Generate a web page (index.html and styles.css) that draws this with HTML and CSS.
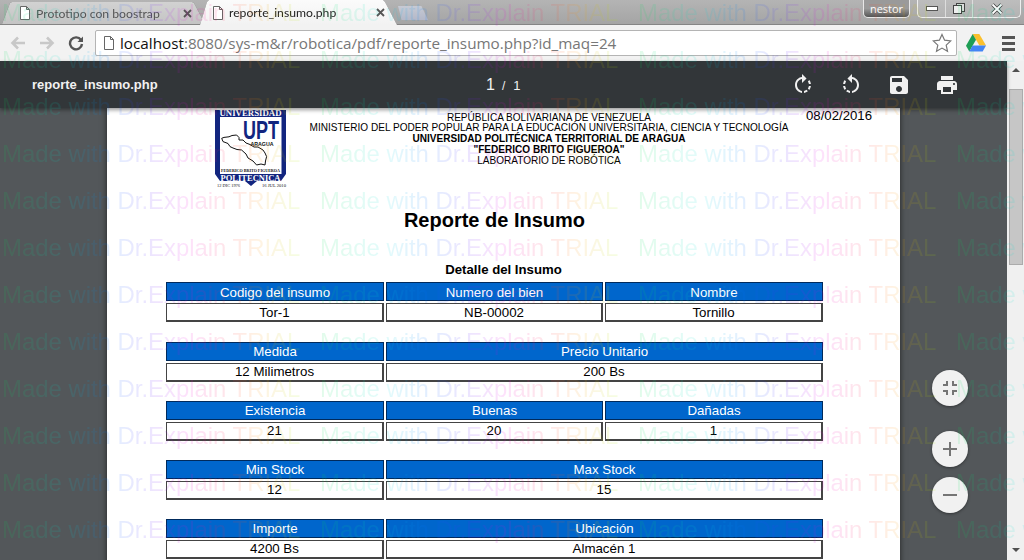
FILE: index.html
```html
<!DOCTYPE html>
<html lang="es">
<head>
<meta charset="utf-8">
<title>reporte_insumo.php</title>
<link rel="stylesheet" href="styles.css">
</head>
<body>
<div class="window">
  <header class="tabstrip">
    <div class="tab tab-bg">
      <svg class="doc" viewBox="0 0 12 14"><path d="M1.500.5h6l3 3v10h-9z M7.500.5v3h3"/></svg>
      <span class="tab-title">Prototipo con boostrap</span>
      <svg class="tab-x" viewBox="0 0 9 9"><path d="M1 1l7 7M8 1L1 8"/></svg>
    </div>
    <div class="tab tab-on">
      <svg class="doc" viewBox="0 0 12 14"><path d="M1.500.5h6l3 3v10h-9z M7.500.5v3h3"/></svg>
      <span class="tab-title">reporte_insumo.php</span>
      <svg class="tab-x" viewBox="0 0 9 9"><path d="M1 1l7 7M8 1L1 8"/></svg>
    </div>
    <div class="tab-new"></div>
    <div class="winctl">
      <div class="user">nestor</div>
      <div class="ctl-group">
        <div class="ctl"><svg viewBox="0 0 12 6"><rect x=".5" y=".5" width="11" height="4" fill="#fff" stroke="#555"/></svg></div>
        <div class="ctl ctl-max"><svg viewBox="0 0 12 12"><rect x="3.500" y=".5" width="8" height="8" fill="#ddd" stroke="#444"/><rect x=".5" y="2.500" width="8" height="8" fill="#eee" stroke="#444"/></svg></div>
        <div class="ctl ctl-x"><svg viewBox="0 0 12 12"><path d="M1.500 1.500l9 9M10.500 1.500l-9 9" stroke="#444" stroke-width="3.400"/><path d="M1.500 1.500l9 9M10.500 1.500l-9 9" stroke="#fff" stroke-width="1.800"/></svg></div>
      </div>
    </div>
  </header>

  <nav class="omnibar">
    <svg class="nav" viewBox="0 0 16 16"><path d="M15 8H3M8 2.500L2.500 8 8 13.500" fill="none" stroke="#c8c8c8" stroke-width="2.600"/></svg>
    <svg class="nav" viewBox="0 0 16 16"><path d="M1 8h12M8 2.500L13.500 8 8 13.500" fill="none" stroke="#c8c8c8" stroke-width="2.600"/></svg>
    <svg class="nav" viewBox="0 0 16 16"><path d="M13 5A6 6 0 1 0 14 9" fill="none" stroke="#555" stroke-width="2.400"/><path d="M15 1.500V7H9.500z" fill="#555"/></svg>
    <div class="address">
      <svg class="doc doc-url" viewBox="0 0 12 14"><path d="M1.500.5h6l3 3v10h-9z M7.500.5v3h3"/></svg>
      <span class="url"><span class="host">localhost</span>:8080/sys-m&amp;r/robotica/pdf/reporte_insumo.php?id_maq=24</span>
      <svg class="star" viewBox="0 0 20 20"><path d="M10 1.500l2.600 5.700 6.200.7-4.600 4.200 1.300 6.100L10 15.100l-5.500 3.100 1.300-6.100L1.200 7.900l6.200-.7z" fill="#fff" stroke="#777" stroke-width="1.200"/></svg>
    </div>
    <svg class="drive" viewBox="0 0 20 18"><path d="M6.700 0h6.600l6.700 11.500h-6.600z" fill="#fbc02d"/><path d="M6.700 0l3.300 5.800L3.300 17.500 0 11.700z" fill="#1e9e55"/><path d="M6.600 11.500H20l-3.300 6H3.300z" fill="#4285f4"/></svg>
    <div class="menu"><i></i><i></i><i></i></div>
  </nav>

  <div class="pdf">
    <div class="pdf-main">
      <section class="toolbar">
        <div class="file">reporte_insumo.php</div>
        <div class="pager"><span class="pg-cur">1</span><span class="pg-sep">/</span><span class="pg-tot">1</span></div>
        <div class="tools">
          <svg class="tool" viewBox="0 0 24 24"><path d="M15.550 5.550L11 1v3.070C7.060 4.560 4 7.920 4 12s3.050 7.440 7 7.930v-2.020c-2.840-.48-5-2.940-5-5.910s2.160-5.430 5-5.910V10l4.550-4.450zM19.930 11c-.17-1.390-.72-2.730-1.620-3.890l-1.420 1.420c.54.750.88 1.600 1.020 2.470h2.020zM13 17.900v2.020c1.390-.17 2.740-.71 3.900-1.610l-1.440-1.440c-.75.54-1.590.89-2.460 1.030zm3.890-2.420l1.420 1.410c.9-1.160 1.450-2.500 1.620-3.890h-2.020c-.14.870-.48 1.720-1.020 2.480z"/></svg>
          <svg class="tool" viewBox="0 0 24 24"><path d="M7.110 8.530L5.700 7.110C4.800 8.270 4.240 9.610 4.070 11h2.020c.14-.87.49-1.720 1.020-2.470zM6.090 13H4.070c.17 1.390.72 2.730 1.620 3.890l1.410-1.420c-.52-.75-.87-1.590-1.010-2.470zm1.010 5.320c1.160.9 2.510 1.440 3.900 1.610V17.900c-.87-.15-1.710-.49-2.460-1.030L7.100 18.320zM13 4.070V1L8.450 5.550 13 10V6.090c2.840.48 5 2.940 5 5.910s-2.160 5.430-5 5.910v2.020c3.950-.49 7-3.850 7-7.930s-3.050-7.440-7-7.930z"/></svg>
          <svg class="tool" viewBox="0 0 24 24"><path d="M17 3H5c-1.110 0-2 .9-2 2v14c0 1.100.89 2 2 2h14c1.100 0 2-.9 2-2V7l-4-4zm-5 16c-1.660 0-3-1.340-3-3s1.340-3 3-3 3 1.340 3 3-1.340 3-3 3zm3-10H5V5h10v4z"/></svg>
          <svg class="tool" viewBox="0 0 24 24"><path d="M19 8H5c-1.660 0-3 1.340-3 3v6h4v4h12v-4h4v-6c0-1.660-1.340-3-3-3zm-3 11H8v-5h8v5zm3-7c-.55 0-1-.45-1-1s.45-1 1-1 1 .45 1 1-.45 1-1 1zm-1-9H6v4h12V3z"/></svg>
        </div>
      </section>
      <main class="stage">
        <article class="sheet">
          <div class="letterhead">
            <svg class="logo" viewBox="0 0 72 78">
              <path d="M0 0H71V64L66 71H42L36 76 30 71H5L0 64Z" fill="#12257f"/>
              <rect x="5" y="7" width="61.500" height="57" fill="#fff"/>
              <text x="35.500" y="6.200" class="lg-top" textLength="62" lengthAdjust="spacingAndGlyphs">UNIVERSIDAD</text>
              <text x="46" y="29" class="lg-upt" textLength="36" lengthAdjust="spacingAndGlyphs">UPT</text>
              <path d="M6.700 28.300L9 27.400 14 26.800 17 25.500 21.600 25 24 27.500 24 30 28 30 31 33 35 34.500 39 37 43 37 48 40 50 43 51.600 46.600 50.500 51 50 55 46 54 41.600 55 38 51 33 48 31 44 26.600 40 22 39.500 18 38 15 36.600 13 33.500 8 31.600Z" fill="#fff" stroke="#111" stroke-width="1"/>
              <text x="47" y="35.500" class="lg-ara" textLength="23" lengthAdjust="spacingAndGlyphs">ARAGUA</text>
              <text x="35.500" y="61.700" class="lg-fed" textLength="59" lengthAdjust="spacingAndGlyphs">FEDERICO BRITO FIGUEROA</text>
              <text x="35.500" y="70.500" class="lg-pol" textLength="60" lengthAdjust="spacingAndGlyphs">POLITECNICA</text>
              <text x="13.500" y="77" class="lg-date" textLength="23" lengthAdjust="spacingAndGlyphs">12 DIC 1976</text>
              <text x="59" y="77" class="lg-date" textLength="24" lengthAdjust="spacingAndGlyphs">16 JUL 2010</text>
            </svg>
            <div class="lh-text">
              <div>REPÚBLICA BOLIVARIANA DE VENEZUELA</div>
              <div>MINISTERIO DEL PODER POPULAR PARA LA EDUCACIÓN UNIVERSITARIA, CIENCIA Y TECNOLOGÍA</div>
              <div class="b">UNIVERSIDAD POLITÉCNICA TERRITORIAL DE ARAGUA</div>
              <div class="b">"FEDERICO BRITO FIGUEROA"</div>
              <div>LABORATORIO DE ROBÓTICA</div>
            </div>
            <div class="date">08/02/2016</div>
          </div>
          <h1 class="title">Reporte de Insumo</h1>
          <h2 class="subtitle">Detalle del Insumo</h2>

          <div class="grid">
            <div class="th">Codigo del insumo</div><div class="th">Numero del bien</div><div class="th">Nombre</div>
            <div class="td">Tor-1</div><div class="td">NB-00002</div><div class="td">Tornillo</div>
          </div>
          <div class="grid">
            <div class="th">Medida</div><div class="th span2">Precio Unitario</div>
            <div class="td">12 Milimetros</div><div class="td span2">200 Bs</div>
          </div>
          <div class="grid">
            <div class="th">Existencia</div><div class="th">Buenas</div><div class="th">Dañadas</div>
            <div class="td">21</div><div class="td">20</div><div class="td">1</div>
          </div>
          <div class="grid">
            <div class="th">Min Stock</div><div class="th span2">Max Stock</div>
            <div class="td">12</div><div class="td span2">15</div>
          </div>
          <div class="grid">
            <div class="th">Importe</div><div class="th span2">Ubicación</div>
            <div class="td">4200 Bs</div><div class="td span2">Almacén 1</div>
          </div>
        </article>
        <div class="fabs">
          <button class="fab fab-fit"><svg viewBox="0 0 24 24"><path d="M5 16h3v3h2v-5H5v2zm3-8H5v2h5V5H8v3zm6 11h2v-3h3v-2h-5v5zm2-11V5h-2v5h5V8h-3z"/></svg></button>
          <button class="fab"><svg viewBox="0 0 24 24"><path d="M19 13h-6v6h-2v-6H5v-2h6V5h2v6h6v2z"/></svg></button>
          <button class="fab"><svg viewBox="0 0 24 24"><path d="M19 13H5v-2h14v2z"/></svg></button>
        </div>
      </main>
    </div>
    <aside class="scrollbar">
      <span class="arrow arrow-up"></span>
      <span class="thumb"></span>
      <span class="arrow arrow-down"></span>
    </aside>
  </div>
</div>

<svg class="watermark" aria-hidden="true">
  <defs>
    <linearGradient id="wm-grad" gradientUnits="userSpaceOnUse" x1="0" y1="0" x2="297" y2="0">
      <stop offset="0" stop-color="#00e050"/>
      <stop offset=".22" stop-color="#00e0e0"/>
      <stop offset=".36" stop-color="#0070ff"/>
      <stop offset=".5" stop-color="#6020ff"/>
      <stop offset=".62" stop-color="#f000e0"/>
      <stop offset=".76" stop-color="#ff2040"/>
      <stop offset=".86" stop-color="#ff9000"/>
      <stop offset="1" stop-color="#b0f000"/>
    </linearGradient>
    <pattern id="wm" patternUnits="userSpaceOnUse" x="2" y="-8" width="318" height="47">
      <text x="0" y="29" class="wm-text" fill="url(#wm-grad)">Made with Dr.Explain TRIAL</text>
    </pattern>
  </defs>
  <rect width="100%" height="100%" fill="url(#wm)"/>
</svg>
</body>
</html>
```
FILE: styles.css
```css
* { box-sizing: border-box; }
html, body { margin: 0; height: 100%; overflow: hidden; }
body { font-family: "Liberation Sans", Arial, sans-serif; background: #53575a; position: relative; }
.window { width: 1024px; height: 560px; display: flex; flex-direction: column; overflow: hidden; }

/* tabs */
.tabstrip { height: 25px; flex: none; display: flex; align-items: flex-end; padding-left: 2px; background: linear-gradient(#b4b4b4, #a4a4a4); box-shadow: inset 0 -1px #858585; position: relative; }
.tab { position: relative; display: flex; align-items: center; font: 12.200px Lato, "Open Sans", sans-serif; filter: drop-shadow(0 0 .6px #666); }
.tab::before { content: ""; position: absolute; inset: 0; z-index: -1; }
.tab-bg { width: 203px; height: 22px; margin-bottom: 1px; padding: 0 13px 0 17px; color: #555; isolation: isolate; }
.tab-bg::before { background: linear-gradient(#d2d2d2, #c4c4c4); clip-path: polygon(0 100%, 8px 1px, 10px 0, 190px 0, 192px 1px, 100% 100%); }
.tab-on { width: 197px; height: 25px; margin-left: -5px; padding: 0 12px; color: #222; isolation: isolate; }
.tab-on::before { background: linear-gradient(#fbfbfb, #f2f2f2); clip-path: polygon(0 100%, 7px 2px, 9px 0, 183px 0, 185px 2px, 100% 100%); }
.tab-title { flex: 1; margin-left: 5px; white-space: nowrap; }
.tab-x { width: 9px; height: 9px; fill: none; stroke: #555; stroke-width: 1.800; flex: none; }
.doc { width: 12px; height: 14px; fill: #fff; stroke: #666; stroke-width: 1; flex: none; }
.tab-new { width: 30px; height: 14px; margin-left: 1px; align-self: flex-start; margin-top: 6px; background: linear-gradient(#c6cad4, #b4b8c8); clip-path: polygon(0 0, 78% 0, 100% 100%, 12% 100%); }
.winctl { margin-left: auto; align-self: flex-start; display: flex; gap: 7px; padding-right: 3px; }
.user { width: 47px; height: 18px; text-align: center; font: 11px/18px "Open Sans", sans-serif; color: #fff; background: linear-gradient(#9a9a9a 50%, #555); border: 1px solid #e8e8e8; border-top: 0; border-radius: 0 0 5px 5px; }
.ctl-group { display: flex; border: 1px solid #eee; border-top: 0; border-radius: 0 0 5px 5px; height: 18px; }
.ctl { width: 28px; display: flex; align-items: center; justify-content: center; border-right: 1px solid #ddd; background: rgba(255,255,255,.12); }
.ctl svg { width: 12px; height: 12px; fill: none; }
.ctl-max { width: 27px; }
.ctl-x { width: 47px; border-right: 0; }

/* address bar */
.omnibar { height: 36px; flex: none; display: flex; align-items: center; padding: 0 0 0 10px; background: #f2f2f2; }
.nav { width: 16px; height: 16px; margin-right: 13px; flex: none; }
.address { width: 862px; height: 26px; margin-left: -2px; display: flex; align-items: center; padding: 0 4px 0 7px; background: #fff; border: 1px solid #b4b4b4; border-radius: 2px; }
.doc-url { margin-right: 5px; }
.url { flex: 1; font: 15.250px "Open Sans", "DejaVu Sans", sans-serif; color: #777; white-space: nowrap; }
.host { color: #111; }
.star { width: 20px; height: 20px; }
.drive { width: 20px; height: 18px; margin-left: 9px; flex: none; }
.menu { width: 13px; margin-left: 16px; display: flex; flex-direction: column; gap: 3px; flex: none; }
.menu i { height: 3px; background: #555; display: block; }

/* pdf area */
.pdf { flex: 1; display: flex; min-height: 0; }
.pdf-main { flex: 1; min-width: 0; display: flex; flex-direction: column; }
.toolbar { height: 47px; flex: none; display: flex; align-items: center; background: #323639; color: #f1f1f1; position: relative; z-index: 2; box-shadow: 0 2px 4px rgba(0,0,0,.4); }
.file { width: 481px; padding-left: 32px; font-weight: bold; font-size: 13px; }
.pager { width: 300px; display: flex; align-items: baseline; font-size: 13px; }
.pg-cur { font-size: 16px; margin-left: 5px; }
.pg-sep { margin: 0 8px 0 7px; font-size: 12px; }
.tools { display: flex; gap: 24px; margin-left: 10px; }
.tool { width: 24px; height: 24px; fill: #f1f1f1; }

/* viewer */
.stage { flex: 1; position: relative; overflow: hidden; padding-left: 107px; }
.sheet { width: 793px; height: 600px; background: #fff; box-shadow: 0 0 6px rgba(0,0,0,.6); padding: 2px 77px 0 59px; }
.letterhead { height: 80px; display: flex; align-items: flex-start; }
.logo { width: 72px; height: 78px; margin-left: 49px; flex: none; }
.lg-top, .lg-pol { font: bold 8px "Liberation Serif", serif; fill: #fff; text-anchor: middle; }
.lg-upt { font: bold 26px "Liberation Sans Narrow", "Liberation Sans", sans-serif; fill: #12257f; text-anchor: middle; }
.lg-ara { font: bold 5.500px "Liberation Sans", sans-serif; fill: #111; text-anchor: middle; }
.lg-fed { font: bold 5px "Liberation Serif", serif; fill: #111; text-anchor: middle; }
.lg-date { font: 4px "Liberation Serif", serif; fill: #111; text-anchor: middle; }
.lh-text { width: 500px; margin-left: 12px; flex: none; text-align: center; font-size: 10.050px; line-height: 10.750px; color: #000; padding-top: 2.500px; }
.b { font-weight: bold; }
.date { margin: -2px 0 0 7px; font-size: 13.200px; white-space: nowrap; }
.title { margin: 18px 0 0; font-size: 20px; line-height: 24px; text-align: center; color: #000; font-weight: bold; }
.subtitle { margin: 30px 0 0; padding-left: 18px; font-size: 13.200px; line-height: 15px; text-align: center; color: #000; font-weight: bold; }
.grid { display: grid; grid-template-columns: 218px 217px 218px; column-gap: 2px; row-gap: 2px; margin: 0 0 19px; }
.subtitle + .grid { margin-top: 5px; margin-bottom: 20px; }
.subtitle + .grid .th { line-height: 19px; }
.subtitle + .grid .td { line-height: 17px; }
.span2 { grid-column: span 2; }
.th, .td { height: 19px; text-align: center; font-size: 13.300px; }
.th { background: #0066cc; color: #fff; border: 1px solid #002a5c; line-height: 18px; }
.td { background: #fff; color: #000; border: 1px solid #444; border-right-width: 2px; border-bottom-width: 2px; line-height: 16px; }

/* floating buttons */
.fabs { position: absolute; left: 932px; top: 262px; display: flex; flex-direction: column; }
.fab { width: 36px; height: 36px; border: 0; padding: 6px; border-radius: 50%; background: #f1f1f1; box-shadow: 0 1px 3px rgba(0,0,0,.4); margin-bottom: 10px; }
.fab-fit { margin-bottom: 25px; }
.fab svg { width: 24px; height: 24px; fill: #757575; display: block; }

/* scrollbar */
.scrollbar { width: 17px; flex: none; background: #f0f0f0; display: flex; flex-direction: column; align-items: center; }
.arrow { width: 0; height: 0; border-left: 4px solid transparent; border-right: 4px solid transparent; flex: none; }
.arrow-up { border-bottom: 4px solid #505050; margin-top: 7px; }
.arrow-down { border-top: 4px solid #505050; margin: auto 0 8px; }
.thumb { width: 14px; height: 176px; background: #c6c6c6; border: 1px solid #ababab; margin-top: 17px; }

/* watermark */
.watermark { position: absolute; left: 0; top: 0; z-index: 5; width: 1024px; height: 560px; pointer-events: none; opacity: .11; }
.wm-text { font: 23.900px "Liberation Sans", Arial, sans-serif; }
```
